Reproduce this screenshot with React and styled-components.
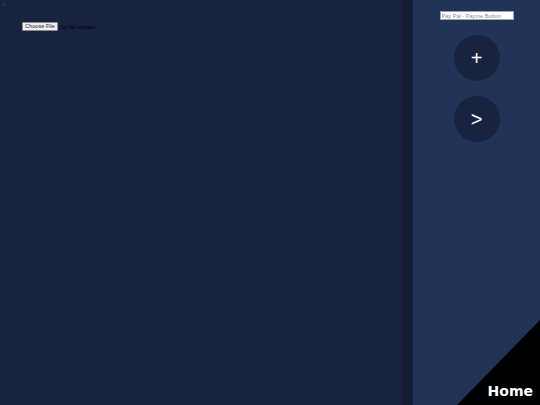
import React from "react";
import styled, { createGlobalStyle } from "styled-components";

const GlobalStyle = createGlobalStyle`
  html, body {
    margin: 0;
    padding: 0;
    height: 100%;
    background: #18233f;
    font-family: "Liberation Sans", Arial, sans-serif;
  }
  #root {
    height: 100%;
  }
`;

const App = () => {
  return (
    <>
      <GlobalStyle />
      <Page>
        <Main>
          <Broken />
          <FileRow>
            <FileButton>Choose File</FileButton>
            <FileText>No file chosen</FileText>
          </FileRow>
        </Main>
        <Divider />
        <Sidebar>
          <PayInput placeholder="Pay Pal - Payme Button" />
          <RoundButton>+</RoundButton>
          <RoundButton>&gt;</RoundButton>
        </Sidebar>
        <Corner>
          <HomeLabel>Home</HomeLabel>
        </Corner>
      </Page>
    </>
  );
};

export default App;

const Page = styled.div`
  position: relative;
  display: flex;
  width: 100%;
  height: 100vh;
  overflow: hidden;
`;

const Main = styled.div`
  flex: 1;
  background: #18233f;
  padding: 3px 0 0 3px;
  box-sizing: border-box;
`;

const Broken = styled.div`
  width: 3px;
  height: 3px;
  background: #26314c;
`;

const FileRow = styled.div`
  display: flex;
  align-items: center;
  gap: 2px;
  margin: 16px 0 0 19px;
`;

const FileButton = styled.div`
  width: 36px;
  height: 9px;
  box-sizing: border-box;
  background: #efefef;
  border: 1px solid #8a8a8a;
  border-radius: 1px;
  font-size: 5.6px;
  line-height: 7px;
  color: #222;
  text-align: center;
`;

const FileText = styled.div`
  font-size: 5.6px;
  color: #000;
`;

const Divider = styled.div`
  width: 11px;
  background: #141f37;
`;

const Sidebar = styled.div`
  width: 127px;
  background: #213457;
  display: flex;
  flex-direction: column;
  align-items: center;
  padding-top: 11px;
  box-sizing: border-box;
`;

const PayInput = styled.input`
  width: 74px;
  height: 9px;
  box-sizing: border-box;
  border: 1px solid #9aa3b3;
  background: #fff;
  padding: 0 1px;
  font-size: 5.6px;
  font-family: "Liberation Sans", Arial, sans-serif;
  margin-bottom: 15px;
  outline: none;
  &::placeholder {
    color: #8a8a8a;
  }
`;

const RoundButton = styled.div`
  width: 46px;
  height: 46px;
  border-radius: 50%;
  background: #18233f;
  color: #fff;
  display: flex;
  align-items: center;
  justify-content: center;
  font-family: "Liberation Sans", Arial, sans-serif;
  font-size: 20px;
  margin-bottom: 15px;
`;

const Corner = styled.div`
  position: absolute;
  right: 0;
  bottom: 0;
  width: 83px;
  height: 85px;
  background: #000;
  clip-path: polygon(100% 0, 100% 100%, 0 100%);
  display: flex;
  align-items: flex-end;
  justify-content: flex-end;
`;

const HomeLabel = styled.div`
  color: #fff;
  font-family: "DejaVu Sans", sans-serif;
  font-weight: 700;
  font-size: 14px;
  line-height: 14px;
  padding: 0 7px 7px 0;
`;
